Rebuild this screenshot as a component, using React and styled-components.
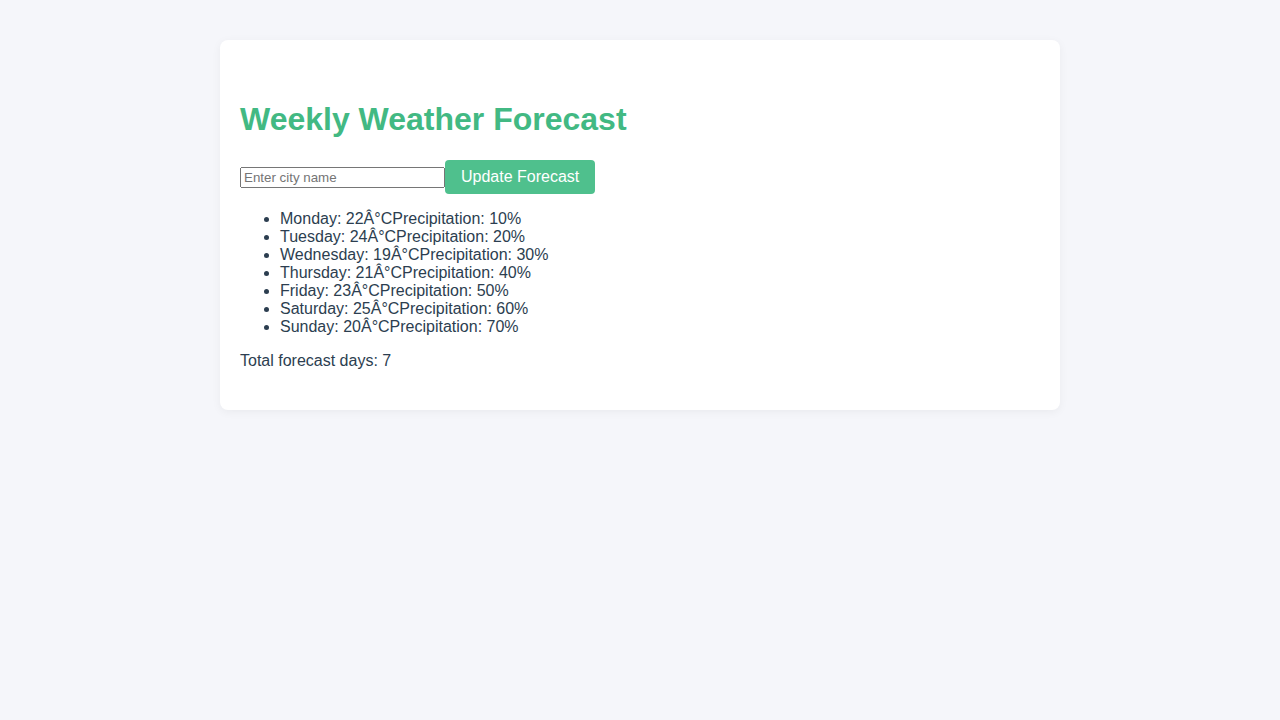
import React, { useState } from "react";
import styled, { createGlobalStyle } from "styled-components";

const GlobalStyle = createGlobalStyle`
  body {
    margin: 0;
    background-color: #f5f6fa;
    font-family: "Liberation Sans", Arial, sans-serif;
    color: #2c3e50;
  }
`;

const Card = styled.main`
  max-width: 800px;
  margin: 40px auto;
  padding: 40px 20px 24px;
  background-color: #ffffff;
  border-radius: 8px;
  box-shadow: 0 2px 10px rgba(0, 0, 0, 0.05);
`;

const Title = styled.h1`
  margin: 21.44px 0;
  font-size: 32px;
  font-weight: bold;
  color: #42b983;
`;

const SearchRow = styled.div`
  font-size: 16px;
`;

const CityInput = styled.input`
  box-sizing: border-box;
  width: 205px;
  font-family: "Liberation Sans", Arial, sans-serif;
  font-size: 13.33px;
`;

const UpdateButton = styled.button`
  padding: 8px 16px;
  border: none;
  border-radius: 4px;
  background-color: #4fc08d;
  color: #ffffff;
  font-family: "Liberation Sans", Arial, sans-serif;
  font-size: 16px;
  cursor: pointer;
`;

const DayList = styled.ul`
  margin: 16px 0;
  padding-left: 40px;
  font-size: 16px;
`;

const Summary = styled.p`
  margin: 16px 0;
  font-size: 16px;
`;

const forecast = [
  { day: "Monday", temp: 22, rain: 10 },
  { day: "Tuesday", temp: 24, rain: 20 },
  { day: "Wednesday", temp: 19, rain: 30 },
  { day: "Thursday", temp: 21, rain: 40 },
  { day: "Friday", temp: 23, rain: 50 },
  { day: "Saturday", temp: 25, rain: 60 },
  { day: "Sunday", temp: 20, rain: 70 },
];

export default function App() {
  const [city, setCity] = useState("");

  return (
    <>
      <GlobalStyle />
      <Card>
        <Title>Weekly Weather Forecast</Title>
        <SearchRow>
          <CityInput
            type='text'
            placeholder='Enter city name'
            value={city}
            onChange={(e) => setCity(e.target.value)}
          />
          <UpdateButton>Update Forecast</UpdateButton>
        </SearchRow>
        <DayList>
          {forecast.map(({ day, temp, rain }) => (
            <li key={day}>
              {day}: {temp}Â°C<span>Precipitation: {rain}%</span>
            </li>
          ))}
        </DayList>
        <Summary>Total forecast days: {forecast.length}</Summary>
      </Card>
    </>
  );
}
